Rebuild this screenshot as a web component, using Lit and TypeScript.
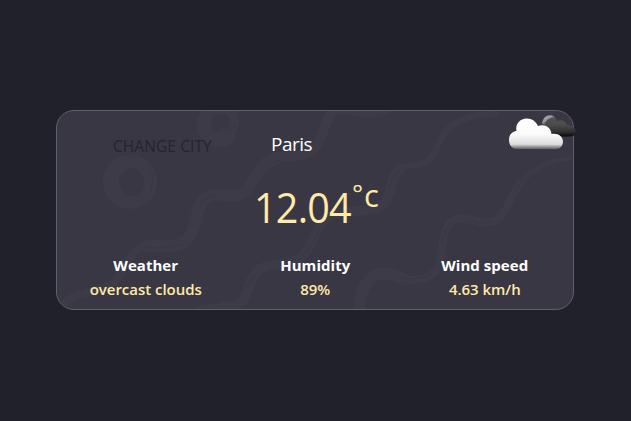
import { LitElement, html, css } from "lit";
import { customElement, property } from "lit/decorators.js";

@customElement("card-pattern")
class CardPattern extends LitElement {
  static styles = css`
    :host { display: block; }
    svg { display: block; width: 100%; height: 100%; }
    .line { fill: none; stroke: #3e3b49; stroke-linecap: round; stroke-linejoin: round; }
    .solid { fill: #3e3b49; fill-rule: evenodd; }
    .grain { fill: none; stroke: #3b3845; stroke-width: 1; stroke-linecap: round; }
  `;
  render() {
    return html`<svg viewBox="57 111 516 198" preserveAspectRatio="none" aria-hidden="true">
      <path class="solid" d="M130 155C146 155 157 167 157 182C157 198 145 209 130 209C114 209 103 197 103 182C103 166 115 155 130 155ZM131 168C122 170 118 176 119 183C120 192 127 197 134 196C141 195 145 189 144 182C143 174 138 168 131 168Z"></path>
      <path class="solid" d="M218 103C230 102 239 110 239 121C239 126 237 129 235 132C237 139 232 146 223 147C208 148 197 139 197 124C197 112 206 104 218 103ZM219 114C213 115 210 120 211 125C212 130 216 133 220 132C218 130 219 128 222 128C226 130 230 128 231 123C231 117 226 113 219 114Z"></path>
      <g class="line">
        <path stroke-width="8" d="M60 309C72 293 83 294 98 290C130 282 122 248 148 246"></path>
        <path stroke-width="12" d="M148 246C166 244 182 252 191 234C199 217 195 199 213 195C229 193 239 201 249 187C258 174 260 163 277 158"></path>
        <path stroke-width="10" d="M277 158C291 154 305 160 316 146C326 132 324 117 336 110C351 105 369 119 386 109"></path>
        <path stroke-width="10" d="M222 306C255 309 242 282 260 269C275 261 293 268 305 253C318 236 315 222 332 215C351 208 375 215 386 201C393 190 389 175 402 169"></path>
        <path stroke-width="6" d="M400 168C411 163 422 168 431 158C440 147 438 137 450 127C463 117 477 114 496 114"></path>
        <path stroke-width="12" d="M359 309C361 291 365 278 380 274C391 272 396 276 404 279"></path>
        <path stroke-width="8" d="M399 278C411 280 426 283 436 270C446 256 439 233 451 222C465 212 479 227 494 221C510 212 509 195 522 181"></path>
        <path stroke-width="5" d="M522 181C534 169 549 159 569 159M198 309C206 305 216 306 224 308"></path>
      </g>
      <g class="grain">
        <path d="M122 178Q126 170 135 172M122 184Q125 175 137 173M150 169Q156 181 149 195M221 130Q231 132 234 126"></path>
        <path d="M144 247Q171 249 184 244M199 206Q204 195 220 195M262 171Q270 161 280 160"></path>
        <path d="M305 254Q317 239 319 229M246 289Q251 278 257 274M389 190Q390 178 399 171"></path>
        <path d="M401 278Q422 281 432 273M442 244Q443 228 454 221M466 221Q482 225 492 221M515 190Q526 174 545 164"></path>
      </g>
    </svg>`;
  }
}

@customElement("cloud-icon")
class CloudIcon extends LitElement {
  static styles = css`
    :host { display: block; }
    svg { display: block; width: 100%; height: 100%; }
  `;
  render() {
    return html`<svg viewBox="505 110 74 46" aria-hidden="true">
      <defs>
        <linearGradient id="white" x1="0" y1="0" x2="0" y2="1">
          <stop offset="0" stop-color="#fff"></stop>
          <stop offset=".5" stop-color="#fbfbfb"></stop>
          <stop offset=".84" stop-color="#dcdcdc"></stop>
          <stop offset=".91" stop-color="#a2a2a2"></stop>
          <stop offset="1" stop-color="#5b5a5e"></stop>
        </linearGradient>
        <linearGradient id="dark" x1="0" y1="0" x2="0" y2="1">
          <stop offset="0" stop-color="#555"></stop>
          <stop offset=".45" stop-color="#4b4b4b"></stop>
          <stop offset=".78" stop-color="#303030"></stop>
          <stop offset="1" stop-color="#080808"></stop>
        </linearGradient>
        <linearGradient id="rim" x1="0" y1="0" x2="1" y2="1">
          <stop offset="0" stop-color="#aaa"></stop>
          <stop offset=".4" stop-color="#999"></stop>
          <stop offset=".65" stop-color="#555" stop-opacity="0"></stop>
        </linearGradient>
      </defs>
      <path fill="url(#dark)" d="M542 124C543 118 546 115.500 550 115.500C554 115.500 556 118 557 121C561 119 566 121 567 125C572 125 575.500 128 575.500 132C575.500 135 573 136.500 569 136.500H547Z"></path>
      <path fill="url(#rim)" d="M542 124C543 118 546 115.300 550 115.300C553 115.300 555 116.500 556 119C551 116.500 546 119 545 125Z"></path>
      <path fill="url(#white)" d="M516.500 149C512 149 509 145 509 140C509 135 512 131.500 516.500 131C515 124 520 118.500 527 118.500C532 118.500 536 121.500 538 126C544 123.500 551 127 551.500 134C557.500 132.500 563 136 563 141.500C563 146 560 149.200 555 149.200Z"></path>
    </svg>`;
  }
}

@customElement("weather-stat")
class WeatherStat extends LitElement {
  @property() label = "";
  @property() value = "";
  static styles = css`
    :host { display: block; text-align: center; font-size: 15px; line-height: 24px; white-space: nowrap; }
    .label { color: #fff; font-weight: 700; letter-spacing: .05px; }
    .value { color: #ffeaa7; font-weight: 600; letter-spacing: -.03px; }
  `;
  render() {
    return html`<div class="label">${this.label}</div><div class="value">${this.value}</div>`;
  }
}

@customElement("app-root")
class AppRoot extends LitElement {
  static styles = css`
    :host {
      display: flex;
      box-sizing: border-box;
      height: 421px;
      padding: 110px 57px 111px 56px;
      background: #21212b;
      font-family: "Open Sans", "Noto Sans", sans-serif;
    }
    .card {
      position: relative;
      box-sizing: border-box;
      width: 518px;
      height: 200px;
      border: 1px solid #625f6c;
      border-radius: 18px;
      background: #3a3744;
    }
    .pattern { position: absolute; inset: 0; overflow: hidden; border-radius: 17px; }
    .icon { position: absolute; top: -1px; right: -6px; width: 74px; height: 46px; }
    .content { position: relative; }
    .top { display: flex; align-items: flex-start; height: 70px; padding-left: 56px; white-space: nowrap; }
    .change {
      margin: 23px 0 0; padding: 0; border: 0; background: none; width: 158px; text-align: left;
      font: inherit; font-size: 15.500px; letter-spacing: .08px; line-height: 24px; color: #24252d;
    }
    .city { font-size: 19px; line-height: 66px; letter-spacing: -.5px; color: #fff; }
    .temp { display: flex; height: 72px; padding-left: 197px; color: #ffeaa7; white-space: nowrap; }
    .degrees { font-size: 42px; line-height: 52px; letter-spacing: -.8px; width: 98px; transform: scaleX(.94); transform-origin: left; }
    .ring { font-size: 26px; line-height: 24px; width: 12px; }
    .unit { font-size: 31px; line-height: 28px; }
    .stats { display: grid; grid-template-columns: repeat(3, 169.500px); padding-left: 4px; }
  `;
  render() {
    return html`<section class="card">
      <card-pattern class="pattern"></card-pattern>
      <div class="content">
        <header class="top">
          <button class="change">CHANGE CITY</button>
          <span class="city">Paris</span>
        </header>
        <div class="temp"><span class="degrees">12.04</span><span class="ring">°</span><span class="unit">c</span></div>
        <div class="stats">
          <weather-stat label="Weather" value="overcast clouds"></weather-stat>
          <weather-stat label="Humidity" value="89%"></weather-stat>
          <weather-stat label="Wind speed" value="4.63 km/h"></weather-stat>
        </div>
      </div>
      <cloud-icon class="icon"></cloud-icon>
    </section>`;
  }
}
